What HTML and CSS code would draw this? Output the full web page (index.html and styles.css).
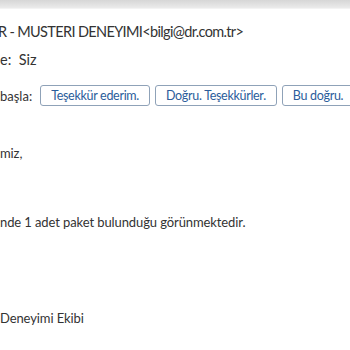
FILE: index.html
```html
<!DOCTYPE html>
<html lang="tr">
<head>
    <meta charset="UTF-8">
    <title>Mesaj</title>
    <link rel="stylesheet" href="styles.css">
</head>
<body>

    <!-- Ribbon edge -->
    <div class="top-strip"></div>

    <!-- Message header -->
    <div class="msg-head">
        <p class="from">R - MUSTERI DENEYIMI&lt;bilgi@dr.com.tr&gt;</p>
        <p class="to">e:&nbsp; Siz</p>
    </div>

    <!-- Quick replies -->
    <div class="quick-replies">
        <span class="qr-label">başla:</span>
        <button class="qr-btn">Teşekkür ederim.</button>
        <button class="qr-btn">Doğru. Teşekkürler.</button>
        <button class="qr-btn">Bu doğru.</button>
    </div>

    <!-- Message body -->
    <div class="msg-body">
        <p class="greet">miz,</p>
        <p class="line">nde 1 adet paket bulunduğu görünmektedir.</p>
        <p class="sign">Deneyimi Ekibi</p>
    </div>

</body>
</html>
```

FILE: styles.css
```css
/* Mail reading pane */
body {
    font-family: 'Lato', 'Noto Sans', sans-serif;
    background-color: #ffffff;
    color: #333333;
    margin: 0;
    padding: 0;
    overflow: hidden;
}

p {
    margin: 0;
}

.top-strip {
    height: 8px;
    background: linear-gradient(#d6d6d6, #ebebeb);
    border-bottom: 1px solid #f3f3f3;
}

/* Header */
.msg-head {
    margin-left: -2px;
    padding-top: 13px;
}

.from {
    font-size: 14.5px;
    letter-spacing: -0.65px;
    line-height: 20px;
}

.to {
    margin-top: 8px;
    margin-left: 2px;
    font-size: 14.5px;
    line-height: 20px;
}

/* Quick replies */
.quick-replies {
    display: flex;
    align-items: center;
    gap: 5px;
    margin-top: 15px;
    white-space: nowrap;
}

.qr-label {
    font-size: 13px;
    margin-right: 3px;
}

.qr-btn {
    font-family: inherit;
    font-size: 12.5px;
    letter-spacing: -0.3px;
    color: #2b5d9b;
    background: #ffffff;
    border: 1px solid #8fa2b8;
    border-radius: 3px;
    height: 21px;
    padding: 0 10px;
    flex-shrink: 0;
}

/* Body */
.msg-body {
    font-size: 13px;
    letter-spacing: -0.1px;
    line-height: 18px;
}

.greet {
    margin-top: 38px;
}

.line {
    margin-top: 51px;
}

.sign {
    margin-top: 78px;
}
```
